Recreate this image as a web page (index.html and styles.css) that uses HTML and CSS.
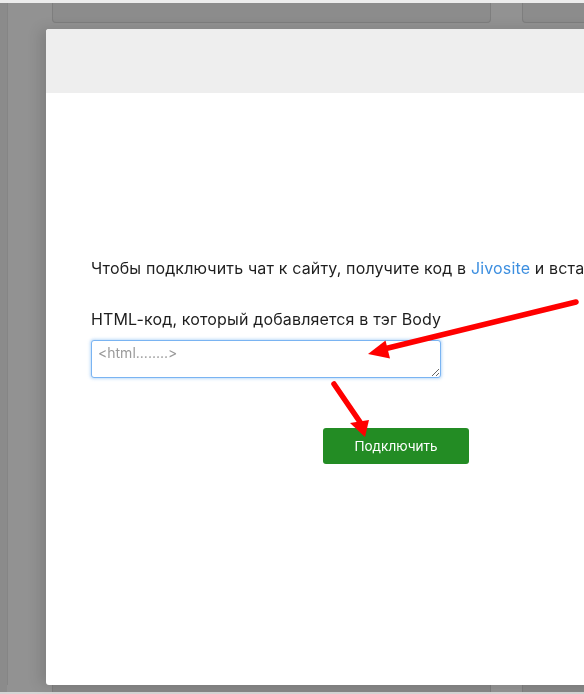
FILE: index.html
```html
<!DOCTYPE html>
<html lang="ru">
<head>
<meta charset="utf-8">
<title>Jivosite</title>
<link rel="stylesheet" href="styles.css">
</head>
<body>
<div class="page">
  <div class="topbar"></div>
  <div class="bg-row">
    <div class="side"></div>
    <div class="cards">
      <div class="card card-main"></div>
      <div class="card card-right"></div>
    </div>
  </div>
  <div class="bg-bottom">
    <div class="card-b card-b-main"></div>
    <div class="card-b card-b-right"></div>
  </div>
  <div class="bottombar"></div>
</div>

<div class="modal">
  <div class="modal-header"></div>
  <div class="modal-body">
    <p class="intro">Чтобы подключить чат к сайту, получите код в <a class="link" href="#">Jivosite</a> и вста</p>
    <label class="label" for="code">HTML-код, который добавляется в тэг Body</label>
    <textarea id="code" class="code" placeholder="&lt;html........&gt;"></textarea>
    <div class="actions">
      <button class="btn" type="button">Подключить</button>
    </div>
  </div>
</div>

<svg class="arrows" width="584" height="694" viewBox="0 0 584 694" xmlns="http://www.w3.org/2000/svg">
  <line x1="576" y1="302" x2="384" y2="349" stroke="#ff0000" stroke-width="5.5" stroke-linecap="round"/>
  <polygon points="368,354 385.5,340.5 390,358.5" fill="#ff0000"/>
  <line x1="334" y1="384" x2="360" y2="422" stroke="#ff0000" stroke-width="5.5" stroke-linecap="round"/>
  <polygon points="365,437 350,423 369,420" fill="#ff0000"/>
</svg>
</body>
</html>
```

FILE: styles.css
```css
html, body {
  margin: 0;
  padding: 0;
  width: 584px;
  height: 694px;
  overflow: hidden;
}

body {
  background: #929292;
  font-family: Inter, "Noto Sans", "DejaVu Sans", sans-serif;
}

.page {
  display: flex;
  flex-direction: column;
  height: 694px;
}

.topbar {
  height: 3px;
  background: #ececec;
}

.bg-row {
  display: flex;
  flex: 1;
}

.side {
  width: 7px;
  background: #8b8b8b;
  border-right: 1px solid #858585;
}

.cards {
  display: flex;
  gap: 31px;
  margin-left: 44px;
  align-items: flex-start;
  flex: 1;
}

.card {
  height: 20px;
  background: #8c8c8c;
  border: 1px solid #7e7e7e;
  border-top: none;
  border-radius: 0 0 4px 4px;
  box-sizing: border-box;
}

.card-main {
  width: 439px;
}

.card-right {
  flex: 1;
  border-right: none;
  border-radius: 0 0 0 4px;
}

.bg-bottom {
  height: 7px;
  display: flex;
  gap: 31px;
  padding-left: 52px;
  background: linear-gradient(90deg, #8b8b8b 0 7px, #929292 7px);
}

.card-b {
  background: #878787;
  border-left: 1px solid #7c7c7c;
  border-right: 1px solid #7c7c7c;
  box-sizing: border-box;
}

.card-b-main {
  width: 439px;
}

.card-b-right {
  flex: 1;
  border-right: none;
}

.bottombar {
  height: 2px;
  background: #d6d6d6;
}

.modal {
  position: fixed;
  left: 46px;
  top: 29px;
  width: 620px;
  height: 656px;
  background: #ffffff;
  border-radius: 3px 0 0 3px;
  box-shadow: -6px 0 14px rgba(0, 0, 0, 0.12);
  overflow: hidden;
}

.modal-header {
  height: 64px;
  background: #eeeeee;
}

.modal-body {
  padding: 165px 0 0 45px;
  color: #1e1e1e;
}

.intro {
  margin: 0;
  font-size: 16px;
  letter-spacing: 0.15px;
  line-height: 20px;
  white-space: nowrap;
}

.link {
  color: #3d8fe0;
  text-decoration: none;
}

.label {
  display: block;
  margin-top: 31px;
  font-size: 16px;
  letter-spacing: 0.15px;
  line-height: 20px;
}

.code {
  display: block;
  margin-top: 11px;
  width: 350px;
  height: 38px;
  box-sizing: border-box;
  padding: 4px 6px;
  border: 1px solid #7ab4f2;
  border-radius: 3px;
  box-shadow: 0 0 3px 1px rgba(110, 175, 240, 0.45);
  font-family: Inter, "Noto Sans", sans-serif;
  font-size: 14px;
  line-height: 16px;
  color: #333;
  outline: none;
}

.code::placeholder {
  color: #9a9a9a;
}

.actions {
  margin-top: 50px;
  padding-left: 232px;
}

.btn {
  display: block;
  width: 146px;
  height: 36px;
  border: none;
  border-radius: 3px;
  background: #238c24;
  color: #ffffff;
  font-family: Inter, "Noto Sans", sans-serif;
  font-size: 13.5px;
  padding: 0;
}

.arrows {
  position: fixed;
  left: 0;
  top: 0;
  pointer-events: none;
}
```
